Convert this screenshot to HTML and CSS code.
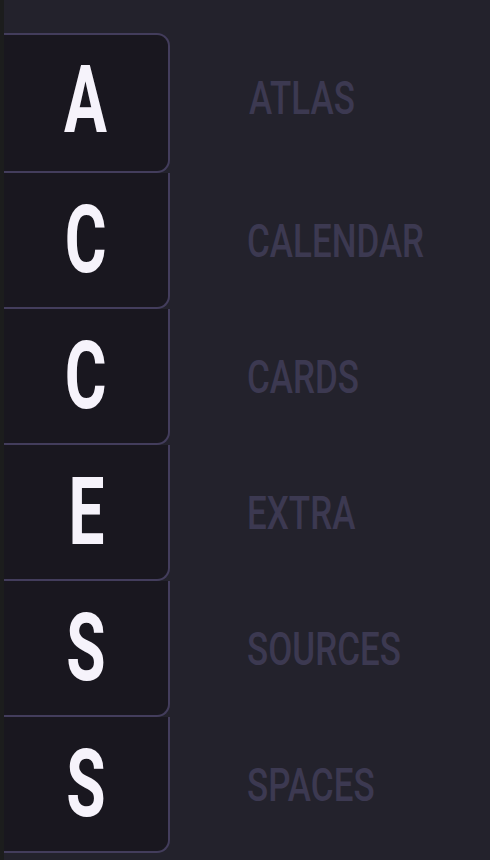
FILE: index.html
```html
<!DOCTYPE html>
<html>
<head>
<meta charset="utf-8">
<link rel="stylesheet" href="styles.css">
</head>
<body>
<div class="page">
  <div class="edge"></div>
  <ul class="stack">
    <li class="row first"><div class="card"><span class="glyph">A</span></div><span class="label">ATLAS</span></li>
    <li class="row"><div class="card"><span class="glyph">C</span></div><span class="label">CALENDAR</span></li>
    <li class="row"><div class="card"><span class="glyph">C</span></div><span class="label">CARDS</span></li>
    <li class="row"><div class="card"><span class="glyph">E</span></div><span class="label">EXTRA</span></li>
    <li class="row"><div class="card"><span class="glyph">S</span></div><span class="label">SOURCES</span></li>
    <li class="row"><div class="card"><span class="glyph">S</span></div><span class="label">SPACES</span></li>
  </ul>
</div>
</body>
</html>
```
FILE: styles.css
```css
html, body {
  margin: 0;
  padding: 0;
  background: #23222c;
  height: 100%;
  overflow: hidden;
}
.page {
  display: flex;
  height: 860px;
}
.edge {
  width: 4px;
  flex: none;
  background: #1c1d1d;
}
.stack {
  list-style: none;
  margin: 33px 0 0 0;
  padding: 0;
  display: flex;
  flex-direction: column;
}
.row {
  display: flex;
  align-items: center;
}
.card {
  width: 164px;
  height: 134px;
  box-sizing: content-box;
  background: #19171f;
  border-right: 2px solid #433d5c;
  border-bottom: 2px solid #433d5c;
  border-bottom-right-radius: 13px;
  display: flex;
  align-items: center;
  justify-content: center;
  flex: none;
}
.first .card {
  height: 136px;
  border-top: 2px solid #433d5c;
  border-top-right-radius: 13px;
}
.glyph {
  display: inline-block;
  font-family: Roboto, "Liberation Sans", sans-serif;
  font-weight: 700;
  font-size: 94px;
  line-height: 1;
  color: #f6f3fb;
  transform: scaleX(0.68);
}
.first .glyph {
  margin-top: -6px;
}
.label {
  display: inline-block;
  margin-left: 77px;
  font-family: Roboto, "Liberation Sans", sans-serif;
  font-weight: 500;
  font-size: 46px;
  line-height: 1;
  color: #3c3951;
  transform: scaleX(0.76);
  transform-origin: left center;
  white-space: nowrap;
}
.first .label {
  margin-top: -10px;
  margin-left: 79px;
}
```
